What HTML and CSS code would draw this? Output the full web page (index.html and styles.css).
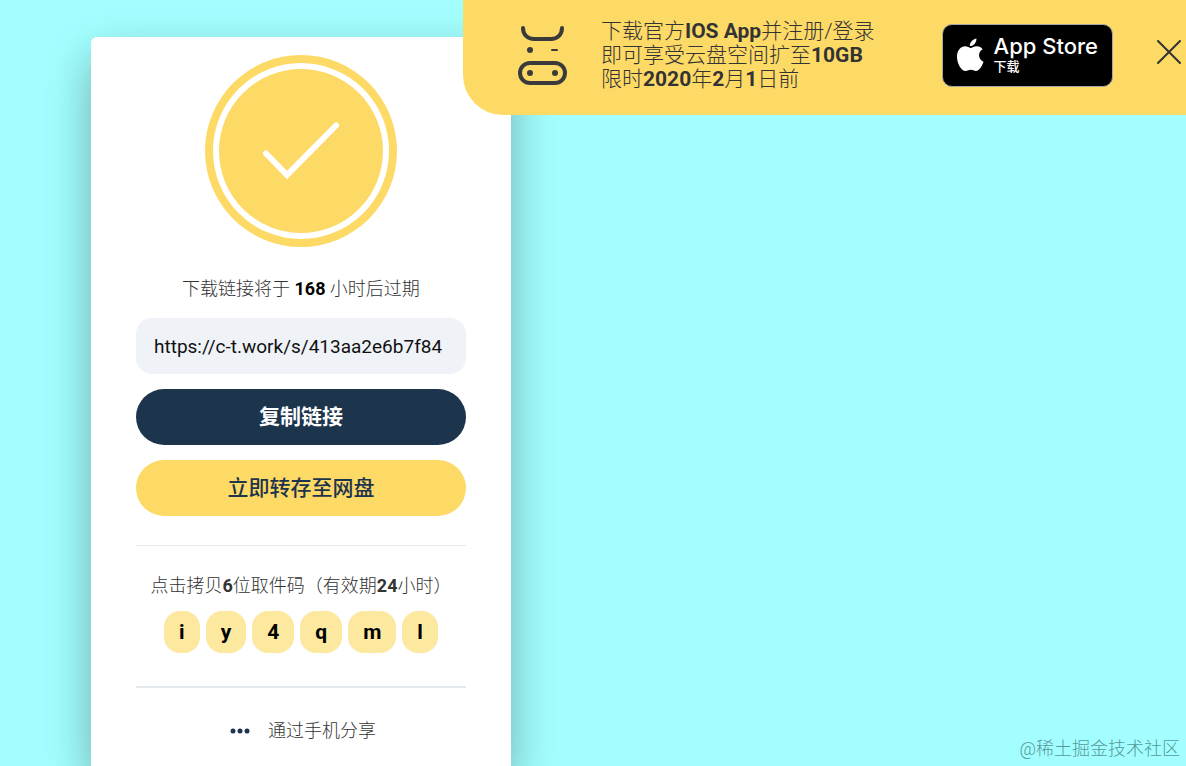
FILE: index.html
```html
<!DOCTYPE html>
<html lang="zh-CN">
<head>
  <meta charset="utf-8">
  <title>下载链接</title>
  <meta name="viewport" content="width=device-width, initial-scale=1">
  <link rel="stylesheet" href="styles.css">
</head>
<body>
  <main class="card">
    <svg class="done" viewBox="0 0 192 192" aria-hidden="true">
      <circle cx="96" cy="96" r="96" fill="#fdd966"/>
      <circle cx="96" cy="96" r="85" fill="none" stroke="#fff" stroke-width="6"/>
      <path d="M61 98.500l21 21.500 49-49.500" fill="none" stroke="#fff" stroke-width="6" stroke-linecap="round"/>
    </svg>
    <label class="expire" for="link">下载链接将于 <b>168</b> 小时后过期</label>
    <input class="link" id="link" type="text" value="https://c-t.work/s/413aa2e6b7f84" readonly>
    <button class="btn btn-dark" type="button">复制链接</button>
    <button class="btn btn-yellow" type="button">立即转存至网盘</button>
    <section class="pickup">
      <p class="hint">点击拷贝<b>6</b>位取件码（有效期<b>24</b>小时）</p>
      <div class="code"><span>i</span><span>y</span><span>4</span><span>q</span><span>m</span><span>l</span></div>
    </section>
    <a class="share" href="#">
      <svg class="dots" viewBox="0 0 20 6" aria-hidden="true">
        <circle cx="3" cy="3" r="2.500"/><circle cx="10" cy="3" r="2.500"/><circle cx="17" cy="3" r="2.500"/>
      </svg>
      通过手机分享
    </a>
  </main>

  <aside class="banner">
    <svg class="cow" viewBox="0 0 50 60" fill="none" stroke="#3a3a3a" stroke-width="4" stroke-linecap="round" aria-hidden="true">
      <path d="M6 3C6 10 11 14 17 14H34C40 14 45 10 45 3"/>
      <path d="M35 25H40" stroke-width="2"/>
      <rect x="3" y="38" width="45" height="20" rx="10"/>
      <g fill="#3a3a3a" stroke="none">
        <circle cx="13" cy="25" r="3"/>
        <circle cx="13" cy="48" r="3"/>
        <circle cx="38" cy="48" r="3"/>
      </g>
    </svg>
    <p class="promo">下载官方<b>IOS App</b>并注册/登录<br>即可享受云盘空间扩至<b>10GB</b><br>限时<b>2020</b>年<b>2</b>月<b>1</b>日前</p>
    <a class="store" href="#">
      <svg class="apple" viewBox="0 0 28 36" fill="#fff" aria-hidden="true">
        <path d="M20.500 0.500C20.800 4.500 17.500 8.600 13.600 8.500 13.300 4.700 16.700 1 20.500 0.500Z"/>
        <path d="M14.200 10.500C16 10.500 18 8.700 21 8.700 23.500 8.700 25.700 10 27 11.900 21.500 15 22.300 22.700 28 25 26.500 29.500 23.300 34.800 20 34.800 17.800 34.800 17.300 33.500 14.500 33.500 11.700 33.500 11 34.800 9 34.900 4.800 35.100 0 26.800 0 20 0 13 4.300 9 8.500 8.900 11 8.900 12.800 10.500 14.200 10.500Z"/>
      </svg>
      <span class="store-text"><span class="store-name">App Store</span><span class="store-sub">下载</span></span>
    </a>
    <button class="close" type="button" aria-label="关闭">
      <svg viewBox="0 0 24 24" fill="none" stroke="#333" stroke-width="2" stroke-linecap="round"><path d="M1 1L23 23M23 1L1 23"/></svg>
    </button>
  </aside>

  <footer class="mark">@稀土掘金技术社区</footer>
</body>
</html>
```
FILE: styles.css
```css
* { box-sizing:border-box; }
body { margin:0; min-height:100vh; padding:37px 91px 0; display:flex; background:#a3ffff;
       font-family:Roboto,"Noto Sans CJK SC",sans-serif; font-weight:300; color:#333; }
p { margin:0; }
b { font-weight:700; }
button { font-family:inherit; border:0; padding:0; cursor:pointer; }
a { color:inherit; text-decoration:none; }

.card { width:420px; max-width:100%; padding:18px 45px 20px; background:white; border-radius:6px 6px 0 0;
        box-shadow:0 20px 48px rgba(0,0,0,0.32); display:flex; flex-direction:column; }
.done { width:192px; height:192px; align-self:center; flex-shrink:0; }
.expire { margin:30px 0 17px; text-align:center; font-size:18px; line-height:24px; }
.expire b { color:#000; }
.link { width:100%; height:56px; padding:0 18px; border:0; border-radius:16px; background:#eff3f7;
        font-family:Roboto,sans-serif; font-size:19px; color:#111; }
.btn { height:56px; margin-top:15px; padding-bottom:4px; border-radius:28px; font-size:21px; }
.btn-dark { background:#1d344d; color:white; font-weight:700; }
.btn-yellow { background:#fdd966; color:#1d344d; font-weight:500; }

.pickup { margin-top:29px; padding:28px 0 33px; text-align:center;
          border-top:1px solid #e8e8e8; border-bottom:2px solid #e4e9ef; }
.hint { font-size:18px; line-height:24px; }
.code { display:flex; justify-content:center; gap:6px; margin-top:13px; }
.code span { padding:0 15px; border-radius:16px; background:#fde89f; color:#000;
             font-size:21px; font-weight:700; line-height:42px; }
.share { display:flex; justify-content:center; align-items:center; gap:18px; margin-top:31px;
         padding-left:4px; font-size:18px; line-height:24px; }
.dots { width:20px; height:6px; fill:#1d344d; }

/* app banner, pinned over the top right corner */
.banner { position:absolute; top:0; right:0; height:115px; padding:0 5px 5px 54px; display:flex; align-items:center;
          background:#fdd966; border-radius:0 0 0 40px; }
.cow { width:50px; height:60px; margin-right:34px; }
.promo { width:341px; font-size:21px; line-height:24px; }
.store { display:flex; align-items:center; gap:10px; width:171px; height:63px; padding:0 14px;
         background:black; border:1px solid #a6a6a6; border-radius:10px; color:white; }
.apple { width:28px; height:36px; }
.store-text { display:flex; flex-direction:column; padding-bottom:2px; white-space:nowrap;
              font-family:Inter,"Noto Sans CJK SC",sans-serif; }
.store-name { font-size:22px; line-height:24px; font-weight:500; }
.store-sub { font-size:13px; line-height:16px; font-weight:500; }
.close { width:24px; height:24px; margin:0 0 6px 44px; background:none; }
.close svg { display:block; }

.mark { position:absolute; right:6px; bottom:4px; font-size:18px; line-height:26px; color:#57999c; }
```
